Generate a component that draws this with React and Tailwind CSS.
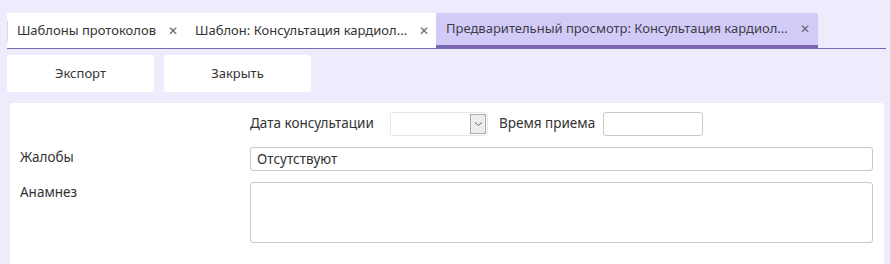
import React from "react";

const Tab = ({ label, active }) => (
  <div
    className={
      "h-[35px] flex items-center pl-[10px] pr-[8px] text-[13px] " +
      (active ? "bg-[#d3cbf7] border-b-[3px] border-[#7b68b3] text-[#3d3d4a]" : "bg-white text-[#333]")
    }
  >
    {!active && <div className="w-px h-[20px] bg-[#d9d9d9] -ml-[10px] mr-[9px]"></div>}
    <span className="whitespace-nowrap">{label}</span>
    <span className="ml-[12px] text-[#666] text-[12px]">✕</span>
  </div>
);

const Btn = ({ children }) => (
  <button className="w-[147px] h-[37px] bg-white rounded-[3px] text-[13px] text-[#333]">{children}</button>
);

export default function App() {
  return (
    <div
      className="w-[890px] h-[264px] overflow-hidden bg-[#eeebfd] text-[#333]"
      style={{ fontFamily: "'Noto Sans', 'Open Sans', sans-serif" }}
    >
      <div className="pt-[13px] px-[7px] pr-[4px]">
        <div className="flex items-end border-b border-[#7b68b3]">
          <div className="w-[179px]"><Tab label="Шаблоны протоколов" /></div>
          <div className="w-[250px]"><Tab label="Шаблон: Консультация кардиол..." /></div>
          <div className="w-[382px]"><Tab label="Предварительный просмотр: Консультация кардиол..." active /></div>
        </div>
      </div>
      <div className="flex gap-[10px] pl-[7px] mt-[6px]">
        <Btn>Экспорт</Btn>
        <Btn>Закрыть</Btn>
      </div>
      <div className="ml-[10px] mr-[6px] mt-[11px] bg-white rounded-t-[3px] h-[200px] text-[13.5px]">
        <div className="flex items-center pt-[9px] h-[33px] pl-[240px]">
          <span className="w-[140px] -mt-[2px]">Дата консультации</span>
          <div className="w-[98px] h-[24px] border border-[#e6e6e6] rounded-[3px] flex justify-end items-center pr-[1px]">
            <div className="w-[16px] h-[20px] bg-[#eeeeee] border border-[#aaaaaa] flex items-center justify-center">
              <svg width="9" height="6" viewBox="0 0 9 6"><path d="M1 1.5 L4.5 4.5 L8 1.5" fill="none" stroke="#666" strokeWidth="1" /></svg>
            </div>
          </div>
          <span className="ml-[11px] w-[104px] -mt-[2px]">Время приема</span>
          <div className="w-[100px] h-[24px] border border-[#c8c8c8] rounded-[3px]"></div>
        </div>
        <div className="flex items-center mt-[11px]">
          <span className="w-[240px] pl-[10px] -mt-[3px]">Жалобы</span>
          <div className="w-[623px] h-[24px] border border-[#c8c8c8] rounded-[3px] flex items-center px-[6px]">Отсутствуют</div>
        </div>
        <div className="flex items-start mt-[11px]">
          <span className="w-[240px] pl-[10px]">Анамнез</span>
          <div className="w-[623px] h-[61px] border border-[#c8c8c8] rounded-[3px]"></div>
        </div>
      </div>
    </div>
  );
}
